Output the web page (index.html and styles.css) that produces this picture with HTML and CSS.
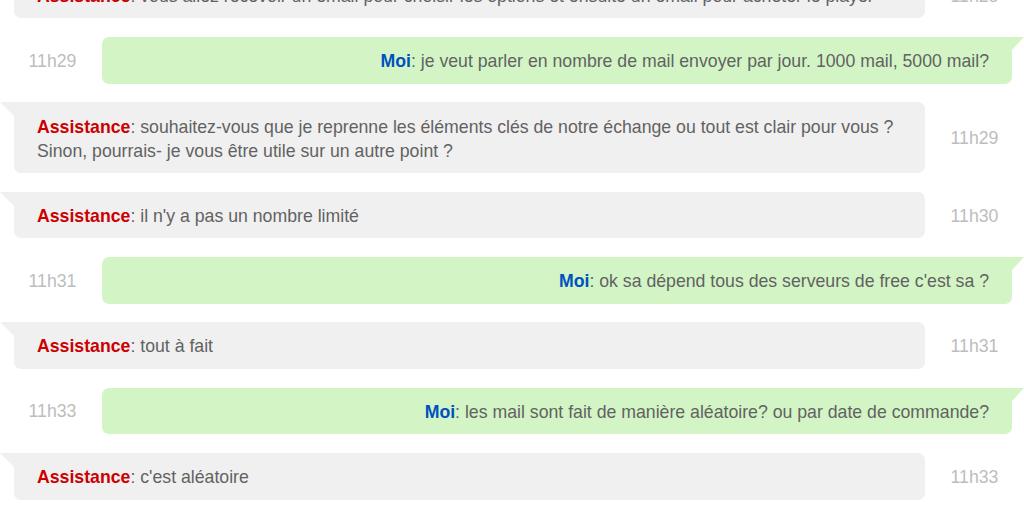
FILE: index.html
```html
<!DOCTYPE html>
<html lang="fr">
<head>
<meta charset="utf-8">
<title>Chat</title>
<link rel="stylesheet" href="styles.css">
</head>
<body>
<div class="chat">
  <div class="row row-assist">
    <div class="bubble bubble-assist"><span class="name-assist">Assistance</span>: vous allez recevoir un email pour choisir les options et ensuite un email pour acheter le player</div>
    <div class="time">11h28</div>
  </div>
  <div class="row row-user">
    <div class="time">11h29</div>
    <div class="bubble bubble-user"><span class="name-user">Moi</span>: je veut parler en nombre de mail envoyer par jour. 1000 mail, 5000 mail?</div>
  </div>
  <div class="row row-assist">
    <div class="bubble bubble-assist"><span class="name-assist">Assistance</span>: souhaitez-vous que je reprenne les éléments clés de notre échange ou tout est clair pour vous ? Sinon, pourrais- je vous être utile sur un autre point ?</div>
    <div class="time">11h29</div>
  </div>
  <div class="row row-assist">
    <div class="bubble bubble-assist"><span class="name-assist">Assistance</span>: il n'y a pas un nombre limité</div>
    <div class="time">11h30</div>
  </div>
  <div class="row row-user">
    <div class="time">11h31</div>
    <div class="bubble bubble-user"><span class="name-user">Moi</span>: ok sa dépend tous des serveurs de free c'est sa ?</div>
  </div>
  <div class="row row-assist">
    <div class="bubble bubble-assist"><span class="name-assist">Assistance</span>: tout à fait</div>
    <div class="time">11h31</div>
  </div>
  <div class="row row-user">
    <div class="time">11h33</div>
    <div class="bubble bubble-user"><span class="name-user">Moi</span>: les mail sont fait de manière aléatoire? ou par date de commande?</div>
  </div>
  <div class="row row-assist">
    <div class="bubble bubble-assist"><span class="name-assist">Assistance</span>: c'est aléatoire</div>
    <div class="time">11h33</div>
  </div>
</div>
</body>
</html>
```
FILE: styles.css
```css
html, body {
  margin: 0;
  padding: 0;
  background: #ffffff;
  overflow: hidden;
}

body {
  font-family: "Liberation Sans", Arial, sans-serif;
  font-size: 17.7px;
  color: #626262;
}

.chat {
  display: flex;
  flex-direction: column;
  gap: 18.67px;
  margin-top: -28.2px;
}

.row {
  display: flex;
  align-items: center;
}

.row-assist {
  padding-left: 14px;
}

.row-user {
  padding-left: 3px;
  padding-right: 12px;
}

.time {
  flex: 0 0 99px;
  text-align: center;
  color: #bdbdbd;
  line-height: 24px;
  padding-top: 1px;
}

.bubble {
  flex: 1 1 auto;
  position: relative;
  padding: 12.2px 23px 10.46px;
  line-height: 24px;
  border-radius: 7px;
}

.bubble-assist {
  background: #f0f0f0;
  border-top-left-radius: 0;
}

.bubble-assist::before {
  content: "";
  position: absolute;
  left: -14px;
  top: 0;
  width: 0;
  height: 0;
  border-top: 14px solid #f0f0f0;
  border-left: 14px solid transparent;
}

.bubble-user {
  background: #d3f5c6;
  border-top-right-radius: 0;
  text-align: right;
}

.bubble-user::before {
  content: "";
  position: absolute;
  right: -12px;
  top: 0;
  width: 0;
  height: 0;
  border-top: 13px solid #d3f5c6;
  border-right: 12px solid transparent;
}

.name-assist {
  color: #cc0000;
  font-weight: bold;
}

.name-user {
  color: #0050bf;
  font-weight: bold;
}
```
